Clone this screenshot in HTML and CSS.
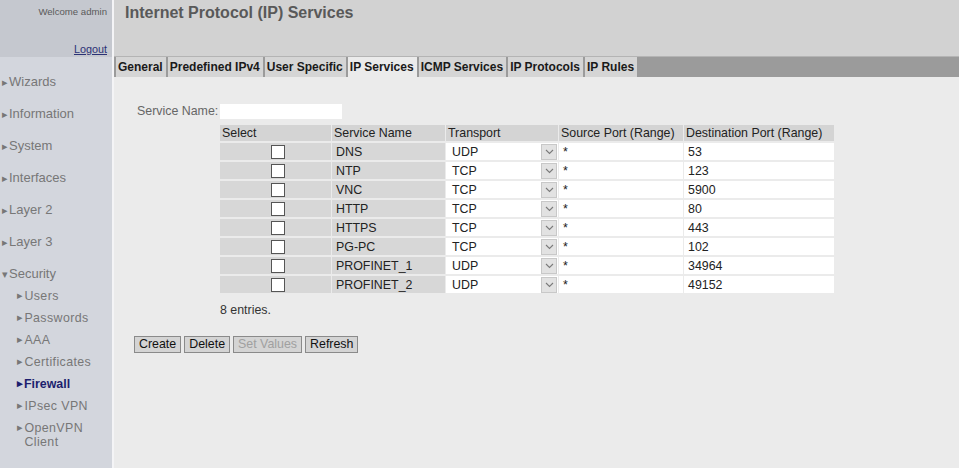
FILE: index.html
```html
<!DOCTYPE html>
<html lang="en">
<head>
  <meta charset="UTF-8" />
  <title>Internet Protocol (IP) Services</title>
  <link rel="stylesheet" href="styles.css">
</head>
<body>
  <div class="page">
    <!-- left navigation -->
    <div class="sidebar">
      <div class="user-box">
        <div class="welcome">Welcome admin</div>
        <a class="logout" href="#">Logout</a>
      </div>
      <ul class="nav">
        <li class="nav-item"><span class="arrow">&#9656;</span>Wizards</li>
        <li class="nav-item"><span class="arrow">&#9656;</span>Information</li>
        <li class="nav-item"><span class="arrow">&#9656;</span>System</li>
        <li class="nav-item"><span class="arrow">&#9656;</span>Interfaces</li>
        <li class="nav-item"><span class="arrow">&#9656;</span>Layer 2</li>
        <li class="nav-item"><span class="arrow">&#9656;</span>Layer 3</li>
        <li class="nav-item open"><span class="arrow">&#9662;</span>Security</li>
        <li class="sub-item"><span class="arrow">&#9656;</span>Users</li>
        <li class="sub-item"><span class="arrow">&#9656;</span>Passwords</li>
        <li class="sub-item"><span class="arrow">&#9656;</span>AAA</li>
        <li class="sub-item"><span class="arrow">&#9656;</span>Certificates</li>
        <li class="sub-item active"><span class="arrow">&#9656;</span>Firewall</li>
        <li class="sub-item"><span class="arrow">&#9656;</span>IPsec VPN</li>
        <li class="sub-item"><span class="arrow">&#9656;</span><span>OpenVPN<br>Client</span></li>
      </ul>
    </div>

    <div class="main">
      <div class="header">
        <h1>Internet Protocol (IP) Services</h1>
      </div>
      <div class="tabs">
        <div class="tab">General</div>
        <div class="tab">Predefined IPv4</div>
        <div class="tab">User Specific</div>
        <div class="tab current">IP Services</div>
        <div class="tab">ICMP Services</div>
        <div class="tab">IP Protocols</div>
        <div class="tab">IP Rules</div>
      </div>

      <div class="content">
        <div class="form-grid">
          <label class="field-label" for="svcname">Service Name:</label>
          <input class="field-input" type="text" id="svcname" />

          <div></div>
          <div>
            <table class="services">
              <tr>
                <th class="c-select">Select</th>
                <th class="c-name">Service Name</th>
                <th class="c-trans">Transport</th>
                <th class="c-src">Source Port (Range)</th>
                <th class="c-dst">Destination Port (Range)</th>
              </tr>
              <tbody id="rows"></tbody>
            </table>
            <div class="entries">8 entries.</div>
          </div>
        </div>

        <div class="buttons">
          <button class="btn">Create</button>
          <button class="btn">Delete</button>
          <button class="btn" disabled>Set Values</button>
          <button class="btn">Refresh</button>
        </div>
      </div>
    </div>
  </div>

  <script>
    const services = [
      ['DNS', 'UDP', '53'],
      ['NTP', 'TCP', '123'],
      ['VNC', 'TCP', '5900'],
      ['HTTP', 'TCP', '80'],
      ['HTTPS', 'TCP', '443'],
      ['PG-PC', 'TCP', '102'],
      ['PROFINET_1', 'UDP', '34964'],
      ['PROFINET_2', 'UDP', '49152']
    ];

    let html = '';
    services.forEach(s => {
      html += `<tr>
        <td class="gray center"><span class="check"></span></td>
        <td class="gray">${s[0]}</td>
        <td class="white"><div class="drop"><span>${s[1]}</span><span class="drop-btn"><svg width="9" height="6" viewBox="0 0 9 6"><path d="M1 1 L4.5 4.5 L8 1" fill="none" stroke="#7a7a7a" stroke-width="1.1"/></svg></span></div></td>
        <td class="white">*</td>
        <td class="white">${s[2]}</td>
      </tr>`;
    });
    document.getElementById('rows').innerHTML = html;
  </script>
</body>
</html>
```

FILE: styles.css
```css
body {
  margin: 0;
  font-family: "Liberation Sans", Arial, sans-serif;
  font-size: 12.4px;
  background: #ebebeb;
}
.page {
  display: flex;
  height: 468px;
  overflow: hidden;
}
.sidebar {
  width: 112px;
  background: #d3d6dd;
  border-right: 2px solid #f4f4f6;
  flex-shrink: 0;
}
.user-box {
  height: 57px;
  background: #c5c8cf;
  text-align: right;
  padding-right: 5px;
  box-sizing: border-box;
}
.welcome {
  font-size: 9.6px;
  color: #5a5a5a;
  padding-top: 6px;
}
.logout {
  display: inline-block;
  margin-top: 26px;
  font-size: 10.8px;
  color: #2b3275;
}
.nav {
  list-style: none;
  margin: 0;
  padding: 17px 0 0 0;
}
.nav-item {
  color: #777;
  font-size: 13px;
  height: 32px;
  padding-left: 2px;
}
.nav-item.open {
  height: 23px;
}
.sub-item {
  color: #777;
  font-size: 12.4px;
  height: 22px;
  padding-left: 17px;
  letter-spacing: 0.4px;
  display: flex;
}
.sub-item.active {
  color: #1c1f6e;
  font-weight: bold;
  letter-spacing: 0;
}
.arrow {
  font-size: 11px;
  margin-right: 1px;
  color: #777;
}
.active .arrow {
  color: #1c1f6e;
}
.main {
  flex: 1;
  display: flex;
  flex-direction: column;
}
.header {
  height: 57px;
  background: #d2d2d2;
  border-bottom: 1px solid #b4b4b4;
  box-sizing: border-box;
  padding: 4px 0 0 11px;
}
h1 {
  margin: 0;
  font-size: 16px;
  color: #595959;
}
.tabs {
  display: flex;
  background: #9b9b9b;
  height: 20px;
  padding-left: 2px;
}
.tab {
  background: #d5d5d5;
  font-weight: bold;
  font-size: 12px;
  color: #1a1a1a;
  padding: 3px 3px 0 2px;
  margin-right: 2px;
  height: 17px;
}
.tab.current {
  background: #ebebeb;
  height: 20px;
}
.content {
  padding: 27px 0 0 20px;
}
.form-grid {
  display: grid;
  grid-template-columns: 86px auto;
  row-gap: 6px;
}
.field-label {
  color: #666;
  padding-left: 3px;
  line-height: 15px;
}
.field-input {
  width: 122px;
  height: 15px;
  border: none;
  background: #fff;
  padding: 0;
  margin: 0;
}
.services {
  border-collapse: separate;
  border-spacing: 1px 2px;
  margin: -2px 0 0 -1px;
}
th {
  background: #d4d4d4;
  font-weight: normal;
  text-align: left;
  color: #222;
  height: 16px;
  padding: 0 2px;
}
.c-select { width: 107px; }
.c-name { width: 109px; }
.c-trans { width: 108px; }
.c-src { width: 120px; }
.c-dst { width: 146px; }
td {
  height: 17px;
  padding: 0 2px;
  color: #222;
}
.gray {
  background: #d7d7d7;
  padding-left: 4px;
}
.white {
  background: #fff;
  padding-left: 4px;
}
.center {
  text-align: center;
}
.check {
  display: inline-block;
  width: 12px;
  height: 12px;
  border: 1px solid #555;
  background: #fff;
  vertical-align: middle;
  margin-left: 3px;
}
.drop {
  display: flex;
  justify-content: space-between;
  align-items: center;
  padding-left: 2px;
}
.drop-btn {
  width: 14px;
  height: 14px;
  background: #e2e2e2;
  border: 1px solid #c8c8c8;
  display: flex;
  align-items: center;
  justify-content: center;
  margin-right: -1px;
}
.entries {
  margin-top: 8px;
  color: #333;
}
.buttons {
  margin-top: 19px;
  display: flex;
  gap: 3px;
}
.btn {
  font-family: "Liberation Sans", Arial, sans-serif;
  font-size: 12.4px;
  background: #d4d4d4;
  border: 1px solid #8a8a8a;
  padding: 1px 4px;
  height: 17px;
  line-height: 13px;
  color: #111;
  margin: 0;
}
.btn:disabled {
  color: #a0a0a0;
}
```
